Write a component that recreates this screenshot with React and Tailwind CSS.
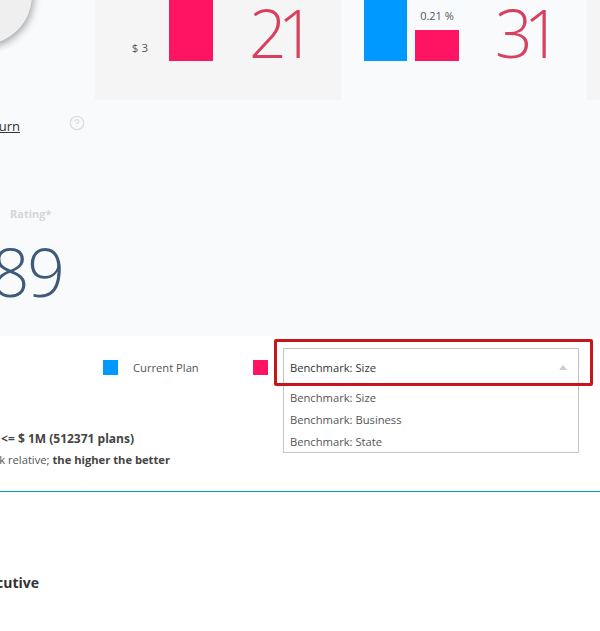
import React from 'react';
import { CircleHelp } from 'lucide-react';

function Score({ children, className }) {
  return (
    <span className={`font-['Open_Sans',sans-serif] font-light text-[66px] leading-none ${className}`}>
      {children}
    </span>
  );
}

function Option({ children }) {
  return <div className="h-[22px] leading-[24px] px-[6px] text-[#555]">{children}</div>;
}

export default function App() {
  return (
    <div className="relative w-[600px] h-[631px] overflow-hidden bg-white font-['Open_Sans',sans-serif] text-[11.2px] text-[#444]">
      {/* circle gauge, mostly scrolled off */}
      <div className="absolute left-[-68px] top-[-55px] w-[100px] h-[100px] rounded-full bg-[#efefef] shadow-[1px_2px_8px_rgba(0,0,0,0.4)]"></div>

      <section className="h-[336px] bg-[#f9fafc]">
        <div className="flex h-[100px] pl-[95px]">
          <div className="flex w-[246px] bg-[#f5f5f5]">
            <div className="flex w-[74px] h-[61px] items-end justify-end pr-[21px] pb-[5px] text-[11.5px] text-[#555]">
              <span>$ 3</span>
            </div>
            <div className="w-[44px] h-[61px] bg-[#ff1464]"></div>
            <div className="flex h-[65px] items-end ml-[36px]">
              <Score className="text-[#d8405f] tracking-[-9px]">21</Score>
            </div>
          </div>
          <div className="flex w-[246px]">
            <div className="ml-[23px] w-[43px] h-[61px] bg-[#0099ff]"></div>
            <div className="ml-[8px] flex w-[44px] h-[61px] flex-col items-center justify-end">
              <span className="text-[11px] leading-[15px] mb-[7px] text-[#555]">0.21 %</span>
              <div className="w-[44px] h-[31px] bg-[#ff1464]"></div>
            </div>
            <div className="flex h-[65px] items-end ml-[36px]">
              <Score className="text-[#d8405f] tracking-[-9px]">31</Score>
            </div>
          </div>
          <div className="flex-1 bg-[#f5f5f5]"></div>
        </div>

        <div className="flex h-[45px] items-start">
          <div className="flex w-[20px] justify-end whitespace-nowrap pt-[18px] text-[13px] leading-[16px] text-[#333] underline">
            Return
          </div>
          <CircleHelp size={16} strokeWidth={2} className="ml-[49px] mt-[15px] text-[#dedede]" />
        </div>

        <div className="pl-[10px] pt-[61px] text-[11px] font-bold leading-[15px] text-[#d6d6d6]">Rating*</div>
        <div className="flex w-[63px] justify-end pt-[17px]">
          <Score className="text-[#3d5a78] tracking-[-2px]">89</Score>
        </div>
      </section>

      <div className="flex h-[62px] items-start pl-[103px] pt-[24px]">
        <div className="h-[15px] w-[15px] bg-[#0099ff]"></div>
        <span className="ml-[15px] leading-[15px] text-[#555]">Current Plan</span>
        <div className="ml-[54px] h-[15px] w-[15px] bg-[#ff1464]"></div>
      </div>

      {/* open dropdown */}
      <div className="absolute left-[283px] top-[348px] w-[296px] border border-[#c4c4c4] bg-white">
        <div className="flex h-[37px] items-center justify-between px-[6px] pt-[1px] text-[#333]">
          <span>Benchmark: Size</span>
          <span className="mr-[5px] mb-[2px] h-0 w-0 border-x-[4px] border-b-[5px] border-x-transparent border-b-[#ccc]"></span>
        </div>
        <div>
          <Option>Benchmark: Size</Option>
          <Option>Benchmark: Business</Option>
          <Option>Benchmark: State</Option>
        </div>
      </div>

      {/* red highlight annotation */}
      <div className="absolute left-[274px] top-[339px] h-[47px] w-[319px] rounded-[2px] border-[3px] border-[#c8141c]"></div>

      <div className="flex w-[134px] justify-end whitespace-nowrap pt-[33px] text-[12px] font-bold leading-[16px] text-[#444]">
        &lt;= $ 1M (512371 plans)
      </div>
      <div className="flex w-[170px] justify-end whitespace-nowrap pt-[5px] leading-[16px] text-[#555]">
        <span>k relative; <b className="text-[#444]">the higher the better</b></span>
      </div>

      <div className="mt-[23px] border-t border-[#00a0b0]"></div>

      <div className="flex w-[39px] justify-end whitespace-nowrap pt-[81px] text-[14px] font-bold leading-[20px] text-[#333]">
        Executive
      </div>
    </div>
  );
}
